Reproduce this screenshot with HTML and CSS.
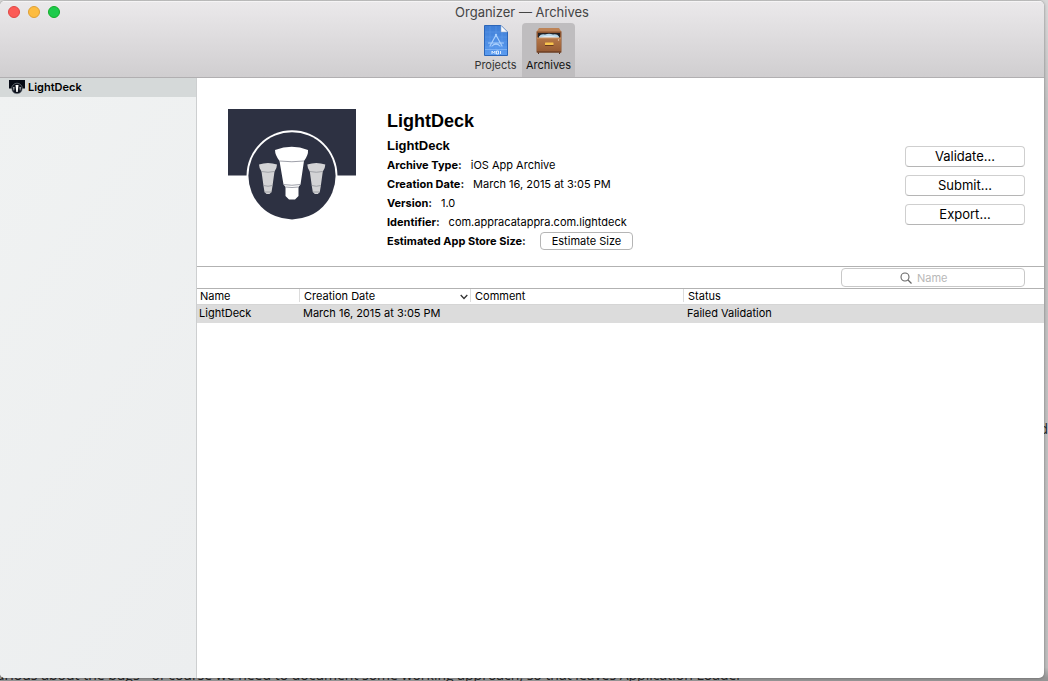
FILE: index.html
```html
<!DOCTYPE html>
<html lang="en">
<head>
<meta charset="utf-8">
<title>Organizer — Archives</title>
<link rel="stylesheet" href="styles.css">
</head>
<body>
<div class="desktop">
  <p class="behind behind-bottom">urious about the bugs - of course we need to document some working approach, so that leaves Application Loader</p>
  <p class="behind behind-right">d</p>
  <div class="window">
    <header class="titlebar">
      <div class="lights">
        <button class="light close" aria-label="Close"></button>
        <button class="light minimize" aria-label="Minimize"></button>
        <button class="light zoom" aria-label="Zoom"></button>
      </div>
      <h1 class="title">Organizer — Archives</h1>
      <nav class="tabs">
        <button class="tab">
          <svg class="tab-icon" width="32" height="32" viewBox="0 0 32 32" aria-hidden="true">
            <defs>
              <linearGradient id="blue" x1="0" y1="0" x2="0" y2="1"><stop offset="0" stop-color="#3f7ed6"/><stop offset="1" stop-color="#5a9bf0"/></linearGradient>
            </defs>
            <path d="M4.500 1.500H21L27.500 8V31.500H4.500Z" fill="url(#blue)" stroke="#2d66b8"/>
            <path d="M5 8H27M5 13H27M5 18H27M5 23H27M10 2V31M16 2V31M22 3V31" stroke="#78aef2" stroke-width=".5" opacity=".5"/>
            <path d="M21 1.500V8H27.500Z" fill="#f7f9fc" stroke="#8da4c4" stroke-width=".5"/>
            <path d="M16 11L10 22M16 11L22 22M8.500 19H23.500M12 22C14 19.500 18 19.500 20 22" fill="none" stroke="#a9cffc" stroke-width="1.200" stroke-linecap="round"/>
            <circle cx="16" cy="11" r="1.200" fill="#a9cffc"/>
            <path d="M5 25.500H27" stroke="#8dbcf8" stroke-width=".7"/>
            <path d="M12 30V27L13.500 29L15 27V30M16.500 27H18.500V30H16.500ZM20.500 27V30" fill="none" stroke="#e8f3ff" stroke-width=".9"/>
          </svg>
          <span>Projects</span>
        </button>
        <button class="tab active" aria-current="page">
          <svg class="tab-icon" width="32" height="32" viewBox="0 0 32 32" aria-hidden="true">
            <defs>
              <linearGradient id="wood" x1="0" y1="0" x2="0" y2="1"><stop offset="0" stop-color="#b67848"/><stop offset="1" stop-color="#955a34"/></linearGradient>
            </defs>
            <path d="M6 4H26L28.500 8H3.500Z" fill="#bd8356"/>
            <path d="M3.500 7.500H28.500V28.500H3.500Z" fill="#8a5430"/>
            <path d="M5 9H27V14.500H5Z" fill="#242225"/>
            <path d="M6 12.500Q8 9.500 12 10.500Q16 9 20 10.500Q24 9.500 26 12.500V14H6Z" fill="#b7d6e9"/>
            <path d="M7 13.500Q15 10 25 13.500V14H7Z" fill="#e3edf3"/>
            <path d="M4 14H28V28H4Z" fill="url(#wood)"/>
            <path d="M4 14H28" stroke="#ce9667"/>
            <path d="M4 28H28M5.500 28.500V30M26.500 28.500V30" stroke="#5b321d"/>
            <rect x="12" y="18.500" width="8.500" height="2.500" rx=".5" fill="#f9c54d"/>
            <path d="M12 21.500H20.500" stroke="#68391e"/>
            <circle cx="25.500" cy="16" r=".7" fill="#eed3b2"/>
          </svg>
          <span>Archives</span>
        </button>
      </nav>
    </header>

    <div class="body">
      <aside class="sidebar">
        <a class="app" href="#lightdeck" aria-current="true">
          <svg width="16" height="16" viewBox="0 0 16 16" aria-hidden="true">
            <path d="M0 0H16V8.500H0Z" fill="#050a15"/>
            <circle cx="8" cy="8.500" r="5.300" fill="#0b101b" stroke="#8d959b" stroke-width=".6"/>
            <path d="M6.500 5H9.500L8.700 12H7.300Z" fill="#fff"/>
            <path d="M4 7H5.600L5.200 10.500H4.500ZM10.400 7H12L11.500 10.500H10.800Z" fill="#a9adb3"/>
          </svg>
          <span>LightDeck</span>
        </a>
      </aside>

      <main class="main">
        <section class="summary">
          <svg class="logo" width="128" height="128" viewBox="0 0 128 128" role="img" aria-label="LightDeck">
            <path d="M0 0H128V66.500H0Z" fill="#2d3142"/>
            <circle cx="64" cy="66.800" r="45.500" fill="#fff"/>
            <circle cx="64" cy="66.800" r="43.600" fill="#2d3142"/>
            <path d="M47 41Q64 34.500 80 41Q80.500 46 76 52L72.500 75.500L70.500 78V87L67 90.500H61L57.500 87V78L55.500 75.500L51.500 52Q47 46 47 41Z" fill="#fff"/>
            <path d="M51.500 52Q64 53.500 76 52M55 75.500Q64 77 72.500 75.500M57.500 78Q64 79 70.500 78" fill="none" stroke="#858893" stroke-width=".8"/>
            <g id="bulb">
              <path d="M31 55.500Q40 52.500 49 55.500Q49 59 46.500 62.500L44.500 77L43.500 83L41.500 85H38.500L36.500 83L35.500 77L33.500 62.500Q31 59 31 55.500Z" fill="#d3d3d5"/>
              <path d="M33.500 62.500Q40 64 46.500 62.500M35.500 76.500Q40 78 44.500 76.500M36.500 83H43.500" fill="none" stroke="#92949b" stroke-width=".8"/>
            </g>
            <use href="#bulb" x="48.300"/>
          </svg>
          <div class="info">
            <h2 class="name">LightDeck</h2>
            <h3 class="subname">LightDeck</h3>
            <dl class="facts">
              <div class="fact"><dt>Archive Type:</dt><dd>iOS App Archive</dd></div>
              <div class="fact"><dt>Creation Date:</dt><dd>March 16, 2015 at 3:05 PM</dd></div>
              <div class="fact"><dt>Version:</dt><dd>1.0</dd></div>
              <div class="fact"><dt>Identifier:</dt><dd>com.appracatappra.com.lightdeck</dd></div>
              <div class="fact size"><dt>Estimated App Store Size:</dt><dd><button class="button small">Estimate Size</button></dd></div>
            </dl>
          </div>
          <div class="actions">
            <button class="button">Validate…</button>
            <button class="button">Submit…</button>
            <button class="button">Export…</button>
          </div>
        </section>

        <div class="filter">
          <label class="search">
            <svg width="12" height="12" viewBox="0 0 12 12" aria-hidden="true"><circle cx="5" cy="5" r="4" fill="none" stroke="#666" stroke-width="1.100"/><path d="M8 8L11.500 11.500" stroke="#666" stroke-width="1.300"/></svg>
            <input type="search" placeholder="Name" aria-label="Name">
          </label>
        </div>

        <table class="archives">
          <colgroup><col class="col-name"><col class="col-date"><col class="col-comment"><col></colgroup>
          <thead>
            <tr>
              <th scope="col">Name</th>
              <th scope="col" aria-sort="descending"><span class="sorted">Creation Date<svg width="8" height="6" viewBox="0 0 8 6" aria-hidden="true"><path d="M.7 1L4 4.500L7.300 1" fill="none" stroke="#333" stroke-width="1.300"/></svg></span></th>
              <th scope="col">Comment</th>
              <th scope="col">Status</th>
            </tr>
          </thead>
          <tbody>
            <tr><td>LightDeck</td><td>March 16, 2015 at 3:05 PM</td><td></td><td>Failed Validation</td></tr>
          </tbody>
        </table>
      </main>
    </div>
  </div>
</div>
</body>
</html>
```
FILE: styles.css
```css
* { box-sizing: border-box; }

body, h1, h2, h3, p, dl, dd { margin: 0; }

body {
  font: 11px/19px Inter, "Liberation Sans", Arial, sans-serif;
  color: #000;
}

button, input { font: inherit; color: inherit; }

.desktop {
  position: relative;
  display: flex;
  min-height: 100vh;
  padding: 1px 4px 3px 0;
  overflow: hidden;
  background: linear-gradient(#d8d8d8, #c2c2c2 15%, #bdbdbd 98%, #959595 calc(100% - 3px));
}

.behind {
  position: absolute;
  color: #222;
  font: 14px/16px "Open Sans", sans-serif;
  white-space: nowrap;
}

.behind-bottom { left: -4px; bottom: -2px; }
.behind-right { right: 0; top: 421px; }

.window {
  position: relative;
  display: flex;
  flex-direction: column;
  flex: 1;
  min-width: 0;
  border-radius: 5px;
  overflow: hidden;
  background: #fff;
  box-shadow: 0 0 3px rgba(0, 0, 0, .4);
}

.titlebar {
  position: relative;
  display: flex;
  flex-direction: column;
  align-items: center;
  border-bottom: 1px solid #b1afb1;
  background: linear-gradient(#ebe9eb, #d0ced0);
  box-shadow: inset 0 1px #f5f4f5;
}

.lights {
  position: absolute;
  left: 8px;
  top: 5px;
  display: flex;
  gap: 8px;
}

.light {
  width: 12px;
  height: 12px;
  padding: 0;
  border: 1px solid;
  border-radius: 50%;
}

.close { background: #fc5b57; border-color: #df4744; }
.minimize { background: #fdbc40; border-color: #de9f34; }
.zoom { background: #1ecb4c; border-color: #12ac28; }

.title {
  font-size: 13px;
  font-weight: 400;
  line-height: 22px;
  color: #444;
}

.tabs { display: flex; }

.tab {
  display: flex;
  flex-direction: column;
  align-items: center;
  gap: 1px;
  width: 53px;
  height: 54px;
  padding: 1px 0 0;
  border: 0;
  border-radius: 4px 4px 0 0;
  background: none;
  line-height: 16px;
  color: #333;
}

.tab.active { background: #bfbdbf; color: #111; }

.body { display: flex; flex: 1; }

.sidebar {
  flex: 0 0 197px;
  border-right: 1px solid #cdcfd0;
  background: linear-gradient(125deg, #f0f2f2, #eceeef);
}

.app {
  display: flex;
  align-items: center;
  gap: 3px;
  height: 19px;
  padding-left: 9px;
  background: #d5d9d9;
  color: #000;
  font-weight: 600;
  text-decoration: none;
}

.main { flex: 1; min-width: 0; }

.summary {
  display: flex;
  gap: 31px;
  min-height: 188px;
  padding: 31px 19px 0 31px;
}

.logo { flex: none; }
.info { flex: 1; }

.name { font: 700 18px/24px "Liberation Sans", Arial, sans-serif; }
.subname { margin-top: 2px; font: 700 13px/21px "Liberation Sans", Arial, sans-serif; }
.fact { display: flex; height: 19px; gap: 9px; white-space: nowrap; }
.fact.size { gap: 14px; }
.fact dt { font-weight: 700; }

.actions {
  display: flex;
  flex-direction: column;
  gap: 8px;
  width: 120px;
  padding-top: 37px;
}

.button {
  height: 21px;
  padding: 0 11px;
  border: 1px solid #cfcfcf;
  border-bottom-color: #b5b5b5;
  border-radius: 4px;
  background: #fff;
  font-size: 13px;
  line-height: 19px;
}

.button.small {
  display: block;
  height: 18px;
  border-color: #b5b5b5;
  font-size: 11px;
  line-height: 16px;
}

.filter {
  display: flex;
  justify-content: flex-end;
  height: 23px;
  padding: 1px 19px 1px 0;
  border: solid #b2b2b2;
  border-width: 1px 0;
}

.search {
  display: flex;
  align-items: center;
  gap: 5px;
  width: 184px;
  padding-left: 58px;
  border: 1px solid #c8c8c8;
  border-radius: 4px;
}

.search input {
  flex: 1;
  min-width: 0;
  padding: 0;
  border: 0;
  outline: 0;
  background: none;
  line-height: 16px;
}

.search input::placeholder { color: #b8b8b8; }

.archives {
  width: 100%;
  table-layout: fixed;
  border-collapse: separate;
  border-spacing: 0;
}

.col-name { width: 103px; }
.col-date { width: 171px; }
.col-comment { width: 213px; }

.archives th {
  height: 16px;
  padding: 0 3px 0 4px;
  border-bottom: 1px solid #d5d5d5;
  font-weight: 400;
  line-height: 15px;
  text-align: left;
  background: linear-gradient(#dcdcdc, #dcdcdc) right top / 1px 13px no-repeat;
}

.archives th:last-child { background: none; }
.archives th:first-child { padding-left: 3px; }
.sorted { display: flex; align-items: center; justify-content: space-between; }

.archives td {
  height: 18px;
  padding: 0 3px 2px;
  background: #dcdcdc;
  line-height: 16px;
}

.archives td:first-child { padding-left: 2px; }
```
